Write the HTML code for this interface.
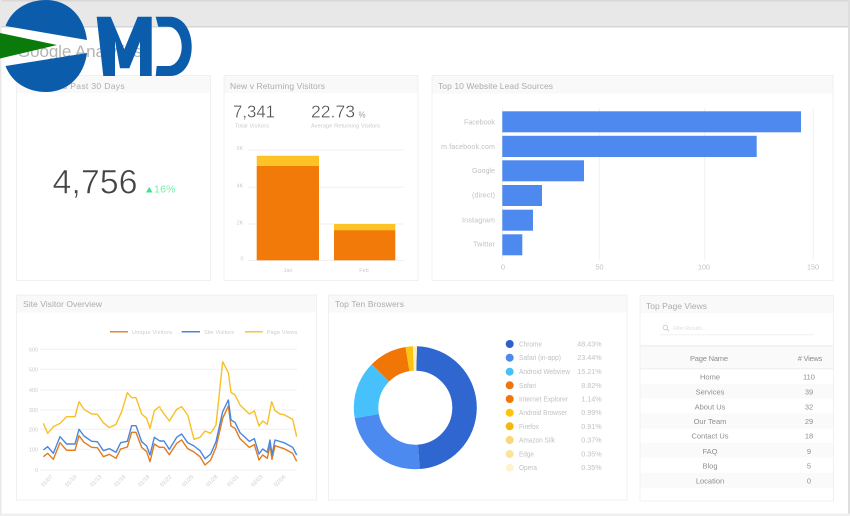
<!DOCTYPE html>
<html>
<head>
<meta charset="utf-8">
<style>
html,body{margin:0;padding:0;background:#fff;width:850px;height:516px;overflow:hidden}
svg{display:block;position:absolute;left:0;top:0;filter:blur(.35px)}
text{font-family:"Liberation Sans",sans-serif}
.t{font-size:8.5px;fill:#acacac}
.s{font-size:7.2px;fill:#c2c2c2}
.x{font-size:5.5px;fill:#cbcbcb}
.r{font-size:7.5px;fill:#8e8e8e;text-anchor:middle}
.card{fill:#fff;stroke:#f0f0f0;stroke-width:1}
.hd{fill:#f9f9f9}
.g{stroke:#f0f0f0;stroke-width:1}
.thin{stroke:#fff;stroke-width:.35px}
</style>
</head>
<body>
<svg width="850" height="516" viewBox="0 0 850 516" xmlns="http://www.w3.org/2000/svg">
<!-- browser frame -->
<rect width="850" height="516" fill="#fff"/>
<rect x="0" y="0" width="850" height="27" fill="#e8e8e8"/>
<rect x="0" y="0" width="850" height="1.5" fill="#d8d8d8"/>
<rect x="0" y="26" width="850" height="1.5" fill="#d6d6d6"/>
<rect x="0" y="0" width="1.5" height="516" fill="#e8e8e8"/>
<rect x="848" y="0" width="2" height="516" fill="#dedede"/>
<rect x="0" y="513.5" width="850" height="2.5" fill="#f0f0f0"/>

<text x="17" y="57" font-size="17" fill="#b4b4b4" textLength="125" lengthAdjust="spacing">Google Analytics</text>

<!-- Card 1 -->
<rect class="card" x="16.500" y="75.500" width="194" height="205"/>
<rect class="hd" x="17" y="76" width="193" height="17"/>
<text class="t" x="125" y="89" text-anchor="end" letter-spacing=".35">Visitors Past 30 Days</text>
<text class="thin" x="52.500" y="193.500" font-size="34" fill="#444" style="stroke-width:.6px">4,756</text>
<polygon points="146,192.500 152.500,192.500 149.200,187" fill="#3fe08a"/>
<text x="154" y="192.500" font-size="10.500" fill="#76ecaa" textLength="21.500" lengthAdjust="spacing">16%</text>

<!-- Card 2 -->
<rect class="card" x="224" y="75.500" width="194" height="205"/>
<rect class="hd" x="224.500" y="76" width="193" height="17"/>
<text class="t" x="230" y="89" textLength="95" lengthAdjust="spacing">New v Returning Visitors</text>
<text class="thin" x="233" y="117.500" font-size="17.500" fill="#4a4a4a" textLength="42" lengthAdjust="spacingAndGlyphs">7,341</text>
<text class="thin" x="311" y="117.500" font-size="17.500" fill="#4a4a4a" textLength="44" lengthAdjust="spacingAndGlyphs">22.73</text>
<text x="358.500" y="117.500" font-size="8" fill="#999">%</text>
<text x="235" y="127.500" font-size="5.500" fill="#c8c8c8" textLength="34" lengthAdjust="spacing">Total Visitors</text>
<text x="311" y="127.500" font-size="5.500" fill="#c8c8c8" textLength="69" lengthAdjust="spacing">Average Returning Visitors</text>
<line class="g" x1="248" y1="150" x2="404" y2="150"/>
<line class="g" x1="248" y1="187.300" x2="404" y2="187.300"/>
<line class="g" x1="248" y1="224" x2="404" y2="224"/>
<line class="g" x1="248" y1="260.500" x2="404" y2="260.500"/>
<text class="x" x="240" y="150" text-anchor="middle">6K</text>
<text class="x" x="240" y="187.500" text-anchor="middle">4K</text>
<text class="x" x="240" y="224.500" text-anchor="middle">2K</text>
<text class="x" x="242" y="260.500" text-anchor="middle">0</text>
<rect x="256.700" y="155.700" width="62.300" height="10.500" fill="#fdc326"/>
<rect x="256.700" y="166" width="62.300" height="94.300" fill="#f27a08"/>
<rect x="334" y="224" width="61.300" height="6.500" fill="#fdc326"/>
<rect x="334" y="230.300" width="61.300" height="30" fill="#f27a08"/>
<text class="x" x="288" y="272" text-anchor="middle">Jan</text>
<text class="x" x="364" y="272" text-anchor="middle">Feb</text>

<!-- Card 3 -->
<rect class="card" x="432" y="75.500" width="401" height="205"/>
<rect class="hd" x="432.500" y="76" width="400" height="17.500"/>
<text class="t" x="438" y="89" textLength="115" lengthAdjust="spacing">Top 10 Website Lead Sources</text>
<line class="g" x1="502.500" y1="108" x2="502.500" y2="260"/>
<line class="g" x1="599.300" y1="108" x2="599.300" y2="260"/>
<line class="g" x1="704.700" y1="108" x2="704.700" y2="260"/>
<line class="g" x1="813.300" y1="108" x2="813.300" y2="260"/>
<g fill="#4e89f0">
<rect x="502.300" y="111.300" width="298.700" height="21"/>
<rect x="502.300" y="135.800" width="254.400" height="21.200"/>
<rect x="502.300" y="160.300" width="81.700" height="21"/>
<rect x="502.300" y="185" width="39.700" height="21"/>
<rect x="502.300" y="209.700" width="30.700" height="21"/>
<rect x="502.300" y="234.300" width="20" height="21"/>
</g>
<text class="s" x="495" y="124.500" text-anchor="end" textLength="31" lengthAdjust="spacing">Facebook</text>
<text class="s" x="495" y="149" text-anchor="end" textLength="54" lengthAdjust="spacing">m.facebook.com</text>
<text class="s" x="495" y="173" text-anchor="end" textLength="23" lengthAdjust="spacing">Google</text>
<text class="s" x="495" y="197.500" text-anchor="end" textLength="23" lengthAdjust="spacing">(direct)</text>
<text class="s" x="495" y="222.500" text-anchor="end" textLength="33" lengthAdjust="spacing">Instagram</text>
<text class="s" x="495" y="246.500" text-anchor="end" textLength="22" lengthAdjust="spacing">Twitter</text>
<text class="s" x="503" y="269.500" text-anchor="middle">0</text>
<text class="s" x="599.500" y="269.500" text-anchor="middle">50</text>
<text class="s" x="704" y="269.500" text-anchor="middle">100</text>
<text class="s" x="813" y="269.500" text-anchor="middle">150</text>

<!-- Card 4 -->
<rect class="card" x="16.500" y="295" width="300" height="205"/>
<rect class="hd" x="17" y="295.500" width="299" height="17"/>
<text class="t" x="23" y="307" textLength="79" lengthAdjust="spacing">Site Visitor Overview</text>
<line x1="110" y1="331.700" x2="128" y2="331.700" stroke="#e08a2c" stroke-width="1.500"/>
<text class="x" x="132" y="334" textLength="40" lengthAdjust="spacing">Unique Visitors</text>
<line x1="181.700" y1="331.700" x2="200" y2="331.700" stroke="#4a86e0" stroke-width="1.500"/>
<text class="x" x="204" y="334" textLength="30" lengthAdjust="spacing">Site Visitors</text>
<line x1="245" y1="331.700" x2="262.700" y2="331.700" stroke="#f6c33a" stroke-width="1.500"/>
<text class="x" x="266.700" y="334" textLength="30.500" lengthAdjust="spacing">Page Views</text>
<line class="g" x1="40" y1="349.300" x2="297" y2="349.300"/>
<line class="g" x1="40" y1="369.300" x2="297" y2="369.300"/>
<line class="g" x1="40" y1="390" x2="297" y2="390"/>
<line class="g" x1="40" y1="410" x2="297" y2="410"/>
<line class="g" x1="40" y1="429.300" x2="297" y2="429.300"/>
<line class="g" x1="40" y1="449.300" x2="297" y2="449.300"/>
<line class="g" x1="40" y1="470" x2="297" y2="470"/>
<text class="x" x="38" y="351.500" text-anchor="end">600</text>
<text class="x" x="38" y="371.500" text-anchor="end">500</text>
<text class="x" x="38" y="392" text-anchor="end">400</text>
<text class="x" x="38" y="412" text-anchor="end">300</text>
<text class="x" x="38" y="431.500" text-anchor="end">200</text>
<text class="x" x="38" y="451.500" text-anchor="end">100</text>
<text class="x" x="38" y="472" text-anchor="end">0</text>
<g fill="none" stroke-width="4.200" stroke-linejoin="round">
<g transform="translate(10,290) scale(.33333)">
<polyline stroke="#f6c029" points="100,400 113,430 130,410 150,400 170,380 195,380 207,335 222,358 245,372 262,373 280,398 298,413 318,403 335,365 352,308 365,323 378,323 395,372 410,385 420,415 433,362 448,350 452,352"/>
<polyline stroke="#e27a1e" points="100,500 113,490 130,508 150,458 170,481 195,481 207,437 222,457 245,472 262,473 280,500 298,493 318,505 332,477 352,471 365,427 378,427 395,472 410,485 420,515 433,462 448,472 452,472"/>
<polyline stroke="#4a86e0" points="100,480 113,470 130,490 150,440 170,462 195,462 207,418 222,438 245,454 262,455 280,482 298,476 318,487 332,458 352,454 365,407 378,407 395,455 410,468 420,495 433,442 448,452 452,453"/>
</g>
<g transform="translate(160,290) scale(.33333)">
<polyline stroke="#f6c029" points="0,355 28,393 50,358 65,350 83,375 102,448 120,442 135,423 152,430 168,405 188,215 205,248 213,307 225,315 240,345 268,372 283,363 297,408 308,393 322,403 335,335 345,362 360,372 372,374 398,388 410,440"/>
<polyline stroke="#e27a1e" points="0,472 12,472 28,494 50,460 65,450 83,476 102,486 120,500 135,525 152,510 168,472 188,385 205,348 213,408 225,415 240,446 268,472 283,464 297,510 308,495 322,505 330,465 336,508 345,467 372,476 398,490 410,514"/>
<polyline stroke="#4a86e0" points="0,453 12,453 28,478 50,442 65,432 83,458 102,468 120,482 135,506 152,492 168,455 188,365 205,330 213,390 225,397 240,428 268,454 283,446 297,492 308,477 322,487 330,450 336,495 345,450 372,458 398,472 410,495"/>
</g>
</g>
<text class="x" text-anchor="middle" transform="translate(48,482) rotate(-45)">01/07</text>
<text class="x" text-anchor="middle" transform="translate(72,482) rotate(-45)">01/10</text>
<text class="x" text-anchor="middle" transform="translate(97,482) rotate(-45)">01/13</text>
<text class="x" text-anchor="middle" transform="translate(121,482) rotate(-45)">01/16</text>
<text class="x" text-anchor="middle" transform="translate(145,482) rotate(-45)">01/19</text>
<text class="x" text-anchor="middle" transform="translate(167,482) rotate(-45)">01/22</text>
<text class="x" text-anchor="middle" transform="translate(189,482) rotate(-45)">01/25</text>
<text class="x" text-anchor="middle" transform="translate(213,482) rotate(-45)">01/28</text>
<text class="x" text-anchor="middle" transform="translate(234,482) rotate(-45)">01/31</text>
<text class="x" text-anchor="middle" transform="translate(258,482) rotate(-45)">02/03</text>
<text class="x" text-anchor="middle" transform="translate(281,482) rotate(-45)">02/06</text>

<!-- Card 5 -->
<rect class="card" x="328.500" y="295" width="298.500" height="205"/>
<rect class="hd" x="329" y="295.500" width="297.500" height="17"/>
<text class="t" x="335" y="307" textLength="69" lengthAdjust="spacing">Top Ten Broswers</text>
<g transform="rotate(-88.500 415.300 407.700)" fill="none" stroke-width="24.500">
<circle cx="415.300" cy="407.700" r="49.250" pathLength="100" stroke="#2f66d0" stroke-dasharray="48.430 100" stroke-dashoffset="0"/>
<circle cx="415.300" cy="407.700" r="49.250" pathLength="100" stroke="#4d8af0" stroke-dasharray="23.440 100" stroke-dashoffset="-48.430"/>
<circle cx="415.300" cy="407.700" r="49.250" pathLength="100" stroke="#47c1fb" stroke-dasharray="15.210 100" stroke-dashoffset="-71.870"/>
<circle cx="415.300" cy="407.700" r="49.250" pathLength="100" stroke="#f07605" stroke-dasharray="9.960 100" stroke-dashoffset="-87.080"/>
<circle cx="415.300" cy="407.700" r="49.250" pathLength="100" stroke="#fdc40f" stroke-dasharray="1.900 100" stroke-dashoffset="-97.040"/>
<circle cx="415.300" cy="407.700" r="49.250" pathLength="100" stroke="#fdeec0" stroke-dasharray="1.060 100" stroke-dashoffset="-98.940"/>
</g>
<circle cx="509.700" cy="344" r="4" fill="#2f5fc8"/>
<circle cx="509.700" cy="357.700" r="4" fill="#4d8af0"/>
<circle cx="509.700" cy="371.700" r="4" fill="#47c1fb"/>
<circle cx="509.700" cy="385.300" r="4" fill="#ee7410"/>
<circle cx="509.700" cy="399" r="4" fill="#f07605"/>
<circle cx="509.700" cy="412.700" r="4" fill="#fdc40f"/>
<circle cx="509.700" cy="426.300" r="4" fill="#f4b70f"/>
<circle cx="509.700" cy="440" r="4" fill="#f9d77a"/>
<circle cx="509.700" cy="454" r="4" fill="#fde29b"/>
<circle cx="509.700" cy="467.700" r="4" fill="#fff3cf"/>
<text class="s" x="519" y="346.500" textLength="23" lengthAdjust="spacingAndGlyphs">Chrome</text><text class="s" x="601.700" y="346.500" text-anchor="end">48.43%</text>
<text class="s" x="519" y="360.200" textLength="42" lengthAdjust="spacingAndGlyphs">Safari (in-app)</text><text class="s" x="601.700" y="360.200" text-anchor="end">23.44%</text>
<text class="s" x="519" y="374.200" textLength="51" lengthAdjust="spacingAndGlyphs">Android Webview</text><text class="s" x="601.700" y="374.200" text-anchor="end">15.21%</text>
<text class="s" x="519" y="387.800" textLength="17" lengthAdjust="spacingAndGlyphs">Safari</text><text class="s" x="601.700" y="387.800" text-anchor="end">8.82%</text>
<text class="s" x="519" y="401.500" textLength="49" lengthAdjust="spacingAndGlyphs">Internet Explorer</text><text class="s" x="601.700" y="401.500" text-anchor="end">1.14%</text>
<text class="s" x="519" y="415.200" textLength="48" lengthAdjust="spacingAndGlyphs">Android Browser</text><text class="s" x="601.700" y="415.200" text-anchor="end">0.99%</text>
<text class="s" x="519" y="428.800" textLength="20" lengthAdjust="spacingAndGlyphs">Firefox</text><text class="s" x="601.700" y="428.800" text-anchor="end">0.91%</text>
<text class="s" x="519" y="442.500" textLength="36" lengthAdjust="spacingAndGlyphs">Amazon Silk</text><text class="s" x="601.700" y="442.500" text-anchor="end">0.37%</text>
<text class="s" x="519" y="456.500" textLength="15" lengthAdjust="spacingAndGlyphs">Edge</text><text class="s" x="601.700" y="456.500" text-anchor="end">0.35%</text>
<text class="s" x="519" y="470.200" textLength="18" lengthAdjust="spacingAndGlyphs">Opera</text><text class="s" x="601.700" y="470.200" text-anchor="end">0.35%</text>

<!-- Card 6 -->
<rect class="card" x="640" y="295.500" width="193.500" height="205.500"/>
<rect class="hd" x="640.500" y="296" width="192.500" height="17"/>
<text class="t" x="646" y="309" textLength="61" lengthAdjust="spacing">Top Page Views</text>
<circle cx="665.300" cy="327.500" r="2.300" fill="none" stroke="#c8c8c8" stroke-width=".8"/>
<line x1="667" y1="329.200" x2="669" y2="331.200" stroke="#c8c8c8" stroke-width=".8"/>
<text x="673" y="330" font-size="5" fill="#e0e0e0" textLength="33" lengthAdjust="spacing">Filter Results...</text>
<line x1="660" y1="334.700" x2="814" y2="334.700" stroke="#f0f0f0"/>
<rect x="640.500" y="345" width="192.500" height="1.500" fill="#f0f0f0"/>
<rect x="640.500" y="346.500" width="192.500" height="22" fill="#fafafa"/>
<line x1="640.500" y1="368.700" x2="833" y2="368.700" stroke="#eeeeee"/>
<rect x="640.500" y="384" width="192.500" height="14.500" fill="#fafafa"/>
<rect x="640.500" y="413.500" width="192.500" height="15" fill="#fafafa"/>
<rect x="640.500" y="442.700" width="192.500" height="15" fill="#fafafa"/>
<rect x="640.500" y="472.700" width="192.500" height="15.500" fill="#fafafa"/>
<text class="r" x="709" y="361" textLength="38" lengthAdjust="spacing">Page Name</text>
<text class="r" x="810" y="361" textLength="24.500" lengthAdjust="spacing"># Views</text>
<text class="r" x="710" y="379.700">Home</text><text class="r" x="809" y="379.700">110</text>
<text class="r" x="710" y="394.700">Services</text><text class="r" x="809" y="394.700">39</text>
<text class="r" x="710" y="409.400">About Us</text><text class="r" x="809" y="409.400">32</text>
<text class="r" x="710" y="424">Our Team</text><text class="r" x="809" y="424">29</text>
<text class="r" x="710" y="438.700">Contact Us</text><text class="r" x="809" y="438.700">18</text>
<text class="r" x="710" y="454">FAQ</text><text class="r" x="809" y="454">9</text>
<text class="r" x="710" y="468.700">Blog</text><text class="r" x="809" y="468.700">5</text>
<text class="r" x="710" y="483.700">Location</text><text class="r" x="809" y="483.700">0</text>

<!-- Logo -->
<path d="M5.500 26 C12 9 28 0 46 0 C68 0 84 16 87 40 Z" fill="#0b5cab"/>
<path d="M5.500 66 L87 53 C84 76 68 92 46 92 C28 92 12 83 5.500 66 Z" fill="#0b5cab"/>
<polygon points="0,33 57,45 0,58.500" fill="#0a7a0a"/>
<polygon points="96.700,16.700 110.700,16.700 124.300,49.300 137.700,16.700 151.700,16.700 151.700,76 140,76 140,41.700 129.300,68.300 120,68.300 115,41 115,76 103.300,76" fill="#0b5cab"/>
<path d="M155.700 16.700 L170 16.700 C183 16.700 191.700 30 191.700 46.700 C191.700 64 183 76 170 76 L155.700 76 L156.700 66 L168.300 66 C176 66 181.700 57 181.700 46.700 C181.700 36 176 26.700 168.300 26.700 L158.300 26.700 Z" fill="#0b5cab"/>
</svg>
</body>
</html>
